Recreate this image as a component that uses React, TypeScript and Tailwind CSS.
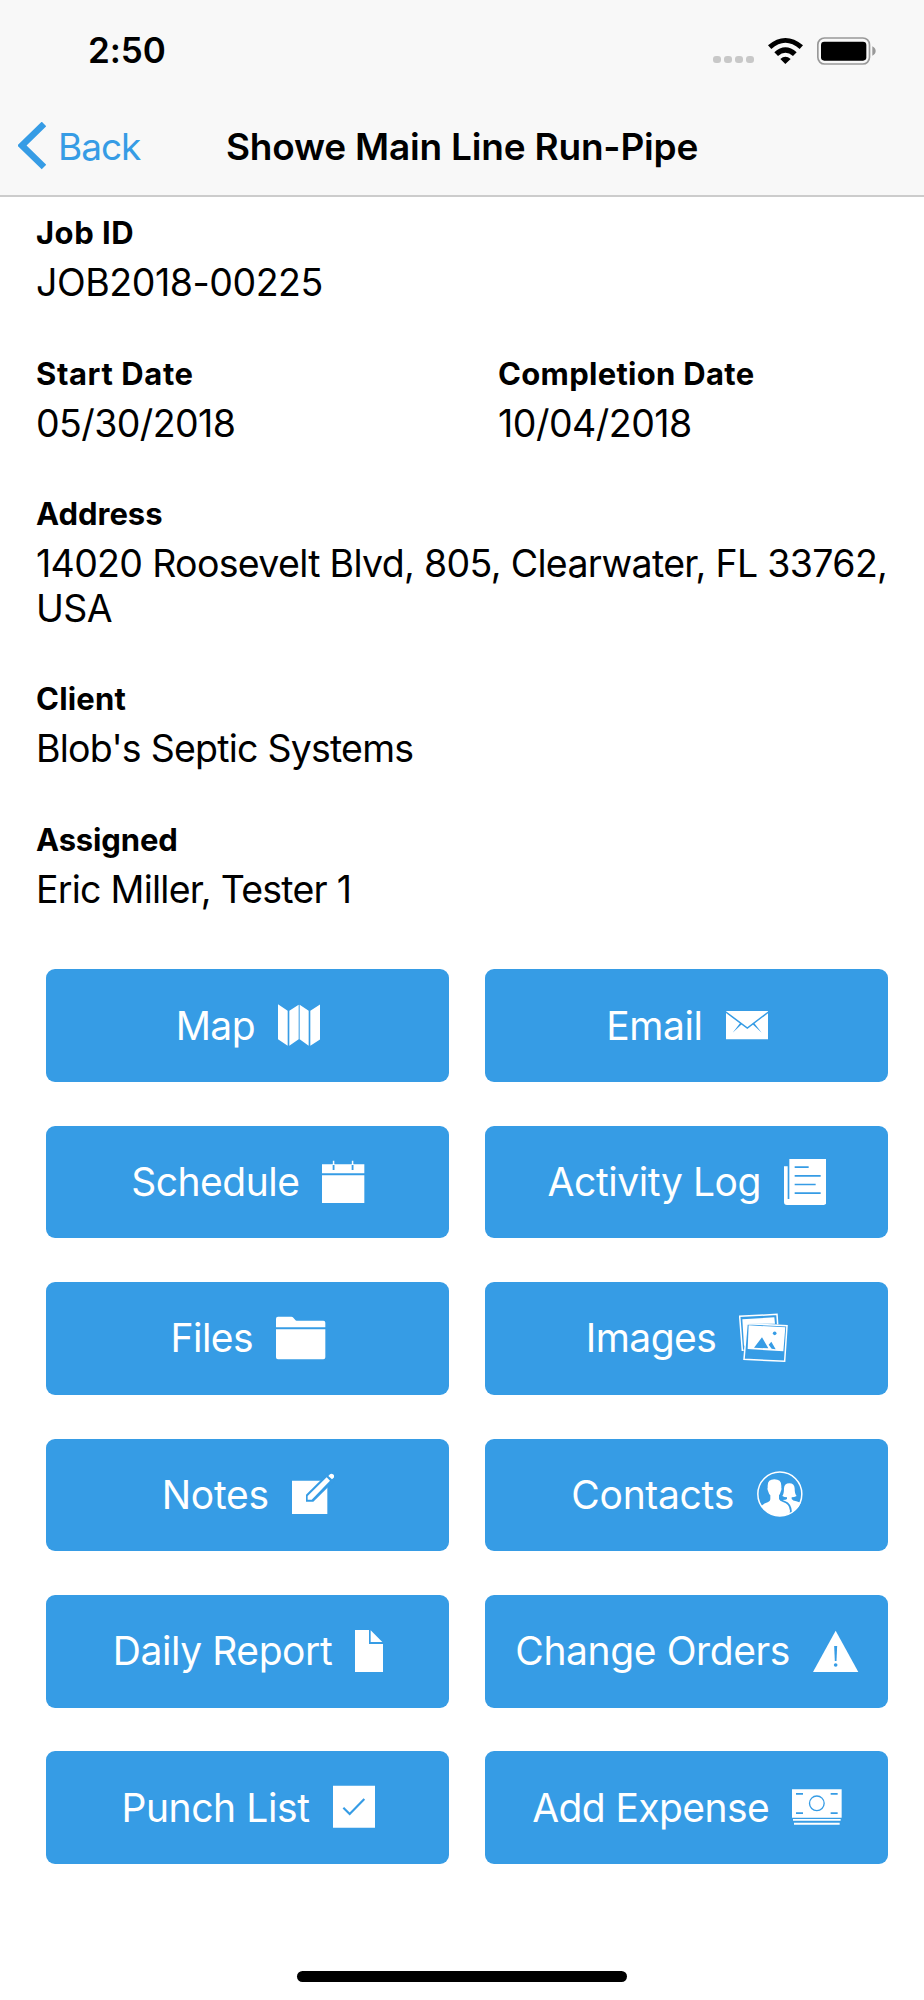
import type { ReactNode } from "react";

const BLUE = "#369ce5";

// Label / value pairs of the job header, one array per row.
const jobFields = [
  [{ label: "Job ID", value: "JOB2018-00225", labelCls: "tracking-[0.5px]", valueCls: "tracking-[-0.45px]" }],
  [
    { label: "Start Date", value: "05/30/2018", labelCls: "tracking-[0.6px]", valueCls: "tracking-[-0.6px]" },
    { label: "Completion Date", value: "10/04/2018", labelCls: "tracking-[0.3px]", valueCls: "tracking-[-0.5px]" },
  ],
  [
    {
      label: "Address",
      value: "14020 Roosevelt Blvd, 805, Clearwater, FL 33762, USA",
      labelCls: "tracking-normal",
      valueCls: "tracking-[-0.67px]",
    },
  ],
  [
    {
      label: "Client",
      value: "Blob's Septic Systems",
      labelCls: "tracking-[0.2px]",
      valueCls: "tracking-[-0.78px]",
    },
  ],
  [
    {
      label: "Assigned",
      value: "Eric Miller, Tester 1",
      labelCls: "tracking-[-0.15px]",
      valueCls: "tracking-[-0.75px]",
    },
  ],
];

function Icon({ w, children }: { w: number; children: ReactNode }) {
  return (
    <svg width={w / 3} height={50} viewBox={`0 0 ${w} 150`} fill="#fff" className="shrink-0">
      {children}
    </svg>
  );
}

const MapIcon = (
  <Icon w={127}>
    <path d="M0 13L29 32V137L0 118ZM34 32L62 14V118L34 137ZM65 14L92 32V137L65 118ZM97 32L127 13V118L97 137Z" />
  </Icon>
);

const MailIcon = (
  <Icon w={127}>
    <path d="M0 33H127V118H0Z" />
    <path d="M-2 35L64 84L129 35" fill="none" stroke={BLUE} strokeWidth="4.5" />
    <path d="M43 68L48 72L20 98ZM84 68L79 72L107 98Z" fill={BLUE} />
  </Icon>
);

const CalendarIcon = (
  <Icon w={127}>
    <path d="M0 22H127V49H0ZM0 55H127V138H0ZM32.5 11H37V22H32.5ZM89.5 11H94V22H89.5Z" />
    <path d="M32 24H37.5V39H32ZM89 24H94.5V39H89Z" fill={BLUE} />
  </Icon>
);

const PaperIcon = (
  <Icon w={127}>
    <path d="M16 6H127V136Q127 144 119 144H9Q0 144 0 135V28H11V126H16Z" />
    <path d="M32 28H74V33H32ZM32 54H110V59H32ZM32 80H95V85H32ZM32 106H110V111H32Z" fill={BLUE} />
  </Icon>
);

const FolderIcon = (
  <Icon w={148}>
    <path d="M0 43V17Q0 11 6 11H46Q50 11 52 14L58 21Q59 23 62 23H142Q148 23 148 29V43ZM0 49H148V133Q148 139 142 139H6Q0 139 0 133Z" />
  </Icon>
);

const ImagesIcon = (
  <Icon w={147}>
    <path d="M14 112H10L2 10L114 4L116 34" fill="none" stroke="#fff" strokeWidth="4.5" />
    <path d="M10 19L106 13L108 32H24L18 98H15Z" />
    <path d="M24 32L144 38L137 145L15 139Z" fill={BLUE} stroke="#fff" strokeWidth="4.5" />
    <path d="M29 37L139 43L133 115L26 108Z" />
    <path d="M45 104L69 73L88 106ZM89 95L97 86L110 109L98 107Z" fill={BLUE} />
    <circle cx="107" cy="61" r="5.5" fill={BLUE} />
  </Icon>
);

const ComposeIcon = (
  <Icon w={127}>
    <path d="M0 35H106V135H0Z" />
    <path d="M42 77L104 16L127 36L64 98H42Z" fill={BLUE} />
    <path d="M47 81L104 25L114 35L59 92H47ZM109 21L114 16Q118 12 123 16Q129 21 125 26L120 31Z" />
  </Icon>
);

const ContactsIcon = (
  <Icon w={137}>
    <circle cx="68.5" cy="75" r="66" fill="none" stroke="#fff" strokeWidth="4.5" />
    <path d="M52 31Q73 31 73 50V57Q75 60 71 68Q69 76 66 79V90Q68 96 78 99Q97 104 99 125L98 134A66 66 0 0 1 13 111Q20 104 32 100Q40 97 40 91V79Q36 76 34 68Q30 60 32 56V50Q32 31 52 31Z" />
    <path d="M97 43Q112 43 113 58Q113 76 119 81Q112 85 104 85V90Q107 95 118 97L131 101Q123 121 105 130Q104 103 84 96Q80 94 77 93Q88 93 90 90V85Q82 85 76 81Q81 76 81 58Q82 43 97 43Z" />
  </Icon>
);

const FileIcon = (
  <Icon w={84}>
    <path d="M0 12H42V54H84V138H0ZM47 13L82 48H47Z" />
  </Icon>
);

const AlertIcon = (
  <Icon w={137}>
    <path d="M68 14L136 138H0Z" />
    <path d="M63.5 60H72.5L70.5 105H65.5Z" fill={BLUE} />
    <circle cx="68" cy="117" r="5.5" fill={BLUE} />
  </Icon>
);

const CheckboxIcon = (
  <Icon w={126}>
    <path d="M0 11H126V137H0Z" />
    <path d="M31 77L50 96L94 51" fill="none" stroke={BLUE} strokeWidth="6.5" />
  </Icon>
);

const CashIcon = (
  <Icon w={149}>
    <path d="M0 22H149V107H0ZM3 111H146V116H3ZM6 122H143V128H6Z" />
    <path d="M12 33H33V38H12ZM116 33H137V38H116ZM12 91H33V96H12ZM116 91H137V96H116Z" fill={BLUE} />
    <circle cx="74.5" cy="64" r="22" fill="none" stroke={BLUE} strokeWidth="4" />
  </Icon>
);

const actions = [
  { label: "Map", icon: MapIcon, cls: "tracking-[-0.6px]" },
  { label: "Email", icon: MailIcon, cls: "tracking-[-0.4px]" },
  { label: "Schedule", icon: CalendarIcon, cls: "tracking-[-0.5px]" },
  { label: "Activity Log", icon: PaperIcon, cls: "tracking-[-0.42px]" },
  { label: "Files", icon: FolderIcon, cls: "tracking-[-0.5px]" },
  { label: "Images", icon: ImagesIcon, cls: "tracking-[-0.55px]" },
  { label: "Notes", icon: ComposeIcon, cls: "tracking-[-0.25px]" },
  { label: "Contacts", icon: ContactsIcon, cls: "tracking-[-0.3px]" },
  { label: "Daily Report", icon: FileIcon, cls: "tracking-[-0.42px]" },
  { label: "Change Orders", icon: AlertIcon, cls: "tracking-[-0.4px]" },
  { label: "Punch List", icon: CheckboxIcon, cls: "tracking-[-0.4px]" },
  { label: "Add Expense", icon: CashIcon, cls: "tracking-[-0.6px]" },
];

function StatusBar() {
  return (
    <div className="flex h-[101px] items-center justify-between pl-[88px] pr-[48px]">
      <span className="text-[35px] font-semibold leading-none tracking-[-0.1px]">2:50</span>
      <div className="flex items-center">
        <div className="mr-[14px] mt-[18px] flex gap-[3px]">
          {[0, 1, 2, 3].map((dot) => (
            <span key={dot} className="h-[7px] w-[8px] rounded-[3px] bg-[#c8c8c8]" />
          ))}
        </div>
        <svg width="35" height="26" viewBox="0 0 105 78" className="mr-[14px]">
          <path d="M0 22Q52 -22 105 22L95 33Q52 -5 10 33ZM19 43Q52 13 86 43L75 54Q52 35 30 54ZM37 63Q52 50 68 63L52 78Z" />
        </svg>
        <svg width="59" height="28" viewBox="0 0 177 84">
          <rect x="2.5" y="3" width="155" height="78" rx="20" fill="none" stroke="#999" strokeWidth="5" />
          <rect x="12" y="14" width="136" height="57" rx="10" />
          <path d="M166 28Q176 33 176 42Q176 51 166 56Z" fill="#999" />
        </svg>
      </div>
    </div>
  );
}

function NavBar() {
  return (
    <div className="grid h-[94px] grid-cols-[1fr_auto_1fr] items-center pb-[3px]">
      <a href="#" className="flex items-center pl-[18px] text-[#369ce5]">
        <svg width="28" height="48" viewBox="0 0 28 48" className="mb-[2px] mr-[12px]">
          <path d="M26 2L4 23.5L26 45" fill="none" stroke="currentColor" strokeWidth="6.5" />
        </svg>
        <span className="text-[37px] leading-none tracking-[-1px]">Back</span>
      </a>
      <h1 className="text-[37px] font-semibold leading-none tracking-[-0.2px]">Showe Main Line Run-Pipe</h1>
    </div>
  );
}

export default function App() {
  return (
    <div className="flex h-[2000px] w-[924px] flex-col bg-white font-['Inter',sans-serif] text-black">
      <header className="h-[197px] border-b-2 border-[#cccccc] bg-[#f8f8f8]">
        <StatusBar />
        <NavBar />
      </header>

      <section className="h-[772.4px] pl-[36px] pt-[14px]">
        {jobFields.map((row) => (
          <div key={row[0].label} className="mb-[46px] flex">
            {row.map((field) => (
              <div key={field.label} className={row.length > 1 ? "w-[462px] shrink-0" : "w-[880px]"}>
                <div className={`h-[44px] text-[31px] font-bold leading-[44px] ${field.labelCls}`}>{field.label}</div>
                <div className={`pt-[6px] text-[37.5px] leading-[44.6px] ${field.valueCls}`}>{field.value}</div>
              </div>
            ))}
          </div>
        ))}
      </section>

      <main className="grid grid-cols-[403px_403px] gap-x-[36px] gap-y-[43.8px] pl-[46px]">
        {actions.map((action) => (
          <button
            key={action.label}
            className="flex h-[112.6px] items-center justify-center gap-[23px] rounded-[9px] bg-[#369ce5] pb-px pl-px text-white"
          >
            <span className={`whitespace-nowrap text-[39px] leading-none ${action.cls}`}>{action.label}</span>
            {action.icon}
          </button>
        ))}
      </main>

      <div className="mx-auto mb-[18px] mt-auto h-[11px] w-[330px] rounded-full bg-black" />
    </div>
  );
}
